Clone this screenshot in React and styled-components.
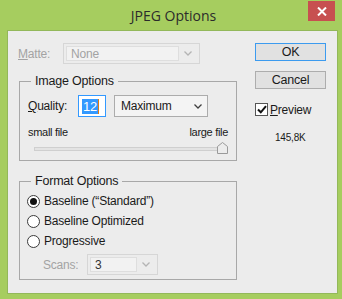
import React from "react";
import styled, { createGlobalStyle } from "styled-components";

const Global = createGlobalStyle`
  html, body { margin: 0; padding: 0; background: #a6cd5f; }
  * { box-sizing: border-box; }
`;

const Window = styled.div`
  width: 342px;
  height: 299px;
  background: #a6cd5f;
  display: flex;
  flex-direction: column;
  padding: 0 4px 5px 7px;
  font-family: "Liberation Sans", Arial, sans-serif;
  font-size: 12px;
  letter-spacing: -0.2px;
  color: #1a1a1a;
`;

const TitleBar = styled.div`
  height: 30px;
  display: flex;
  align-items: flex-start;
  position: relative;
`;

const Title = styled.div`
  flex: 1;
  text-align: center;
  font-family: "Open Sans", "Noto Sans", sans-serif;
  font-size: 14px;
  letter-spacing: 0;
  color: #2b2b2b;
  padding: 6px 0 0 2px;
`;

const CloseBtn = styled.div`
  position: absolute;
  right: 3px;
  top: 1px;
  width: 27px;
  height: 20px;
  background: #c75050;
  display: flex;
  align-items: center;
  justify-content: center;
`;

const Client = styled.div`
  flex: 1;
  background: #ececec;
  border: 1px solid #93b85a;
  padding: 12px 0 0 11px;
  display: grid;
  grid-template-columns: 218px 71px;
  column-gap: 18px;
  align-items: start;
`;

const LeftCol = styled.div`
  display: flex;
  flex-direction: column;
`;

const RightCol = styled.div`
  display: flex;
  flex-direction: column;
`;

const Row = styled.div`
  display: flex;
  align-items: center;
  height: ${(p) => p.$h || 21}px;
  margin-top: ${(p) => p.$mt || 0}px;
`;

const Label = styled.span`
  width: ${(p) => p.$w}px;
  color: ${(p) => (p.$disabled ? "#a3a3a3" : "#1a1a1a")};
  margin-left: ${(p) => p.$ml || 0}px;
`;

const Select = styled.div`
  width: ${(p) => p.$w}px;
  height: ${(p) => p.$h || 21}px;
  border: 1px solid ${(p) => (p.$disabled ? "#d6d6d6" : "#acacac")};
  background: ${(p) => (p.$disabled ? "#ececec" : "#f4f4f4")};
  display: flex;
  align-items: center;
  padding: ${(p) => (p.$disabled ? "2px" : "0 0 0 6px")};
  color: ${(p) => (p.$disabled ? "#a3a3a3" : "#1a1a1a")};
`;

const SelectField = styled.div`
  flex: 1;
  height: 100%;
  border: 1px solid #dedede;
  background: #f2f2f2;
  display: flex;
  align-items: center;
  padding-left: 4px;
  color: ${(p) => (p.$dim ? "#a3a3a3" : "#333")};
`;

const SelectText = styled.span`
  flex: 1;
`;

const Chevron = styled.span`
  width: 18px;
  display: flex;
  justify-content: center;
  align-items: center;
`;

const Group = styled.fieldset`
  margin: ${(p) => p.$mt}px 0 0 0;
  border: 1px solid #a8a8a8;
  padding: ${(p) => p.$pad};
  min-width: 0;
`;

const Legend = styled.legend`
  margin-left: 3px;
  padding: 0 4px;
  line-height: 14px;
  font-size: 12.5px;
  color: #1a1a1a;
`;

const QualityInput = styled.div`
  width: 28px;
  height: 22px;
  border: 1px solid #3399ff;
  background: #fff;
  display: flex;
  align-items: center;
  padding-left: 3px;
  margin-right: 8px;
`;

const Selected = styled.span`
  background: #3399ff;
  color: #fff;
  font-size: 13px;
  line-height: 15px;
  padding: 0 1px;
`;

const Caret = styled.span`
  width: 1px;
  height: 15px;
  background: #e07a10;
`;

const SizeLabels = styled.div`
  display: flex;
  justify-content: space-between;
  margin-top: 9px;
  font-size: 11px;
  letter-spacing: -0.3px;
  height: 13px;
  line-height: 13px;
  padding-right: 1px;
`;

const SliderWrap = styled.div`
  position: relative;
  height: 12px;
  margin: 3px 0 0 6px;
  width: 194px;
`;

const Track = styled.div`
  position: absolute;
  left: 0;
  right: 8px;
  top: 5px;
  height: 4px;
  border: 1px solid #cfcfcf;
  background: #e3e3e3;
`;

const Thumb = styled.svg`
  position: absolute;
  right: 0;
  top: 0;
`;

const RadioRow = styled.label`
  display: flex;
  align-items: center;
  height: 20px;
  gap: 4px;
  margin-left: -1px;
`;

const RadioCircle = styled.span`
  width: 13px;
  height: 13px;
  border-radius: 50%;
  border: 1px solid #3a3a3a;
  background: #fff;
  display: flex;
  align-items: center;
  justify-content: center;
  &::after {
    content: "";
    width: 7px;
    height: 7px;
    border-radius: 50%;
    background: ${(p) => (p.$on ? "#111" : "transparent")};
  }
`;

const Button = styled.div`
  height: 18px;
  border: 1px solid ${(p) => (p.$default ? "#3c9bef" : "#adadad")};
  background: #e1e1e1;
  display: flex;
  align-items: center;
  justify-content: center;
  margin-bottom: 10px;
  font-size: 12.5px;
`;

const CheckRow = styled.div`
  display: flex;
  align-items: center;
  gap: 2px;
  margin-top: 4px;
  height: 13px;
`;

const CheckBox = styled.span`
  width: 13px;
  height: 13px;
  border: 1px solid #555;
  background: #fff;
  display: flex;
  align-items: center;
  justify-content: center;
`;

const FileSize = styled.div`
  margin: 16px 0 0 20px;
  font-size: 10px;
  letter-spacing: -0.2px;
`;

function ChevronIcon({ color }) {
  return (
    <svg width="8" height="5" viewBox="0 0 8 5">
      <polyline points="0.5,0.5 4,4 7.5,0.5" fill="none" stroke={color} strokeWidth="1.3" />
    </svg>
  );
}

export default function App() {
  return (
    <>
      <Global />
      <Window>
        <TitleBar>
          <Title>JPEG Options</Title>
          <CloseBtn>
            <svg width="10" height="9" viewBox="0 0 10 9">
              <path d="M1 0.5 L9 8.5 M9 0.5 L1 8.5" stroke="#fff" strokeWidth="2" />
            </svg>
          </CloseBtn>
        </TitleBar>
        <Client>
          <LeftCol>
            <Row>
              <Label $w={45} $disabled $ml={-1}>
                <u>M</u>atte:
              </Label>
              <Select $w={137} $disabled>
                <SelectField $dim>
                  <SelectText>None</SelectText>
                </SelectField>
                <Chevron>
                  <ChevronIcon color="#b4b4b4" />
                </Chevron>
              </Select>
            </Row>

            <Group $mt={10} $pad="7px 7px 6px 8px">
              <Legend>Image Options</Legend>
              <Row $h={22}>
                <Label $w={50}>
                  <u>Q</u>uality:
                </Label>
                <QualityInput>
                  <Selected>12</Selected>
                  <Caret />
                </QualityInput>
                <Select $w={94} $h={22}>
                  <SelectText>Maximum</SelectText>
                  <Chevron>
                    <ChevronIcon color="#404040" />
                  </Chevron>
                </Select>
              </Row>
              <SizeLabels>
                <span>small file</span>
                <span>large file</span>
              </SizeLabels>
              <SliderWrap>
                <Track />
                <Thumb width="11" height="12" viewBox="0 0 11 12">
                  <path d="M0.5 11.5 V4.5 L5.5 0.5 L10.5 4.5 V11.5 Z" fill="#ececec" stroke="#9a9a9a" />
                </Thumb>
              </SliderWrap>
            </Group>

            <Group $mt={13} $pad="3px 7px 4px 8px">
              <Legend>Format Options</Legend>
              <RadioRow>
                <RadioCircle $on />
                Baseline (“Standard”)
              </RadioRow>
              <RadioRow>
                <RadioCircle />
                Baseline Optimized
              </RadioRow>
              <RadioRow>
                <RadioCircle />
                Progressive
              </RadioRow>
              <Row $mt={3}>
                <Label $w={44} $disabled $ml={15}>
                  Scans:
                </Label>
                <Select $w={71} $disabled>
                  <SelectField>
                    <SelectText>3</SelectText>
                  </SelectField>
                  <Chevron>
                    <ChevronIcon color="#b4b4b4" />
                  </Chevron>
                </Select>
              </Row>
            </Group>
          </LeftCol>

          <RightCol>
            <Button $default>OK</Button>
            <Button>Cancel</Button>
            <CheckRow>
              <CheckBox>
                <svg width="10" height="9" viewBox="0 0 10 9">
                  <polyline points="1,4.5 3.8,7.3 9,1.2" fill="none" stroke="#111" strokeWidth="2" />
                </svg>
              </CheckBox>
              <span>
                <u>P</u>review
              </span>
            </CheckRow>
            <FileSize>145,8K</FileSize>
          </RightCol>
        </Client>
      </Window>
    </>
  );
}
